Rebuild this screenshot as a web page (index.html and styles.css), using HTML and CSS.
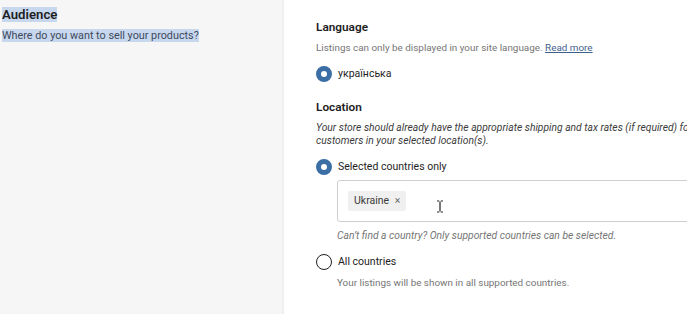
FILE: index.html
```html
<!DOCTYPE html>
<html lang="en">
<head>
    <meta charset="UTF-8">
    <meta name="viewport" content="width=device-width, initial-scale=1.0">
    <title>Audience</title>
    <link rel="stylesheet" href="styles.css">
</head>
<body>
    <div class="page">
        <div class="side">
            <h2 class="side-title"><span class="sel">Audience</span></h2>
            <p class="side-desc"><span class="sel">Where do you want to sell your products?</span></p>
        </div>
        <div class="main">
            <div class="section">
                <h3 class="section-title">Language</h3>
                <p class="help">Listings can only be displayed in your site language. <a href="#" class="link">Read more</a></p>
                <label class="radio">
                    <span class="radio-dot checked"></span>
                    <span class="radio-label">українська</span>
                </label>
            </div>
            <div class="section">
                <h3 class="section-title">Location</h3>
                <p class="note">Your store should already have the appropriate shipping and tax rates (if required) for customers in your selected location(s).</p>
                <label class="radio">
                    <span class="radio-dot checked"></span>
                    <span class="radio-label">Selected countries only</span>
                </label>
                <div class="country-box">
                    <span class="chip">Ukraine <span class="chip-x">×</span></span>
                    <span class="caret">
                        <svg width="8" height="13" viewBox="0 0 8 13"><path d="M1 1h2.2M4.8 1H7M4 1.5v10M1 12h2.2M4.8 12H7" fill="none" stroke="#222" stroke-width="1.2"/></svg>
                    </span>
                </div>
                <p class="hint">Can’t find a country? Only supported countries can be selected.</p>
                <label class="radio">
                    <span class="radio-dot"></span>
                    <span class="radio-label">All countries</span>
                </label>
                <p class="help indent">Your listings will be shown in all supported countries.</p>
            </div>
        </div>
    </div>
</body>
</html>
```

FILE: styles.css
```css
body {
    margin: 0;
    font-family: Roboto, "Noto Sans", sans-serif;
    color: #1e1e1e;
    background: #fff;
    overflow: hidden;
}
.page {
    display: flex;
    width: 760px;
    height: 314px;
}
.side {
    width: 284px;
    flex-shrink: 0;
    background: #f6f6f6;
    border-right: 2px solid #efefef;
    padding: 6px 0 0 2px;
    box-sizing: border-box;
}
.sel {
    background: #c7d7ee;
}
.side-title {
    margin: 0;
    font-size: 13.2px;
    font-weight: 600;
    line-height: 17px;
}
.side-desc {
    margin: 6px 0 0;
    font-size: 10.8px;
    line-height: 13px;
    color: #3e4a5c;
}
.main {
    flex: 1;
    padding: 19px 0 0 32px;
}
.section {
    margin-bottom: 17px;
}
.section-title {
    margin: 0;
    font-size: 11.8px;
    font-weight: 600;
    line-height: 16px;
}
.help {
    margin: 6px 0 0;
    font-size: 9.9px;
    line-height: 14px;
    color: #757575;
}
.help.indent {
    margin: 6px 0 0 21px;
}
.link {
    color: #3f5f8c;
}
.note {
    margin: 6px 0 0;
    width: 390px;
    font-size: 10.3px;
    line-height: 13px;
    font-style: italic;
    color: #3b3b3b;
}
.radio {
    display: flex;
    align-items: center;
    gap: 6px;
    margin-top: 11px;
}
.note + .radio {
    margin-top: 12px;
}
.hint + .radio {
    margin-top: 12px;
}
.radio-dot {
    width: 16px;
    height: 16px;
    border-radius: 50%;
    border: 1.5px solid #1e1e1e;
    box-sizing: border-box;
}
.radio-dot.checked {
    border: 5px solid #3a6ea5;
    background: #fff;
}
.radio-label {
    font-size: 10.5px;
    line-height: 16px;
}
.country-box {
    margin: 5px 0 0 21px;
    height: 42px;
    width: 420px;
    border: 1px solid #cfcfcf;
    border-radius: 3px;
    box-sizing: border-box;
    display: flex;
    align-items: center;
    padding-left: 10px;
    gap: 30px;
}
.chip {
    background: #f0f0f0;
    border-radius: 2px;
    padding: 3px 6px;
    font-size: 10.5px;
    line-height: 14px;
    color: #3a3a3a;
}
.chip-x {
    margin-left: 3px;
    color: #6b6b6b;
}
.caret {
    display: flex;
    margin-top: 10px;
}
.hint {
    margin: 7px 0 0 21px;
    font-size: 10.3px;
    line-height: 13px;
    font-style: italic;
    color: #757575;
}
```
